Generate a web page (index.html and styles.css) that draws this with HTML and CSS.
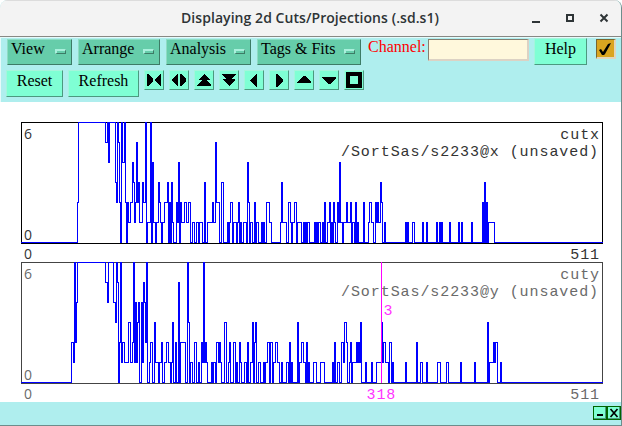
FILE: index.html
```html
<!DOCTYPE html>
<html>
<head>
<meta charset="UTF-8">
<title>Displaying 2d Cuts/Projections (.sd.s1)</title>
<link rel="stylesheet" href="styles.css">
</head>
<body>
<div class="window">
<div class="titlebar">
<span class="title">Displaying 2d Cuts/Projections (.sd.s1)</span>
<svg class="controls" width="80" height="12" viewBox="0 0 80 12">
<path d="M0 10h8" stroke-width="2"/>
<path d="M35 3h6v6h-6z" stroke-width="2"/>
<path d="M68.5 2.5l7 7M75.5 2.5l-7 7" stroke-width="2"/>
</svg>
</div>
<div class="toolbar">
<div class="row menus">
<div class="menu view">View<i></i></div>
<div class="menu arrange">Arrange<i></i></div>
<div class="menu analysis">Analysis<i></i></div>
<div class="menu tags">Tags &amp; Fits<i></i></div>
<label class="channel" for="channel">Channel:</label>
<input class="entry" id="channel" type="text">
<button class="btn help">Help</button>
<button class="check"><svg width="16" height="16" viewBox="0 0 16 16"><path d="M2 9l2-1 2 3 5-8 3-1-1 2-5 9-1 1H5z"/></svg></button>
</div>
<div class="row tools">
<button class="btn reset">Reset</button>
<button class="btn refresh">Refresh</button>
<button class="btn icon"><svg width="18" height="18" viewBox="0 0 18 18"><path d="M2 3h1l5 5v2l-5 5H2zM16 3h-1l-5 5v2l5 5h1z"/></svg></button>
<button class="btn icon"><svg width="18" height="18" viewBox="0 0 18 18"><path d="M8 3v12H7L2 10V8l5-5zM10 3v12h1l5-5V8l-5-5z"/></svg></button>
<button class="btn icon"><svg width="18" height="18" viewBox="0 0 18 18"><path d="M9 3l6 6h-4l5 5v1H2v-1l5-5H3z"/></svg></button>
<button class="btn icon"><svg width="18" height="18" viewBox="0 0 18 18"><path d="M2 3h14v1l-5 4h4v1l-6 6-6-6V8h4L2 4z"/></svg></button>
<button class="btn icon"><svg width="18" height="18" viewBox="0 0 18 18"><path d="M12 3v13h-1l-6-6V9l6-6z"/></svg></button>
<button class="btn icon"><svg width="18" height="18" viewBox="0 0 18 18"><path d="M6 3v13h1l6-6V9L7 3z"/></svg></button>
<button class="btn icon"><svg width="18" height="18" viewBox="0 0 18 18"><path d="M2 12v-1l6-6h2l6 6v1z"/></svg></button>
<button class="btn icon"><svg width="18" height="18" viewBox="0 0 18 18"><path d="M2 6v1l6 6h2l6-6V6z"/></svg></button>
<button class="btn icon"><svg width="18" height="18" viewBox="0 0 18 18"><path fill-rule="evenodd" d="M1 1h16v16H1zM5 5v8h8V5z"/></svg></button>
</div>
</div>
<div class="plots">
<!-- viewBox starts at the left frame line, one count is 20 high -->
<svg class="plot" width="582" height="140" viewBox="21 0 582 140">
<path class="frame" d="M21.5 .5H602.5V121.5H21.5z"/>
<path class="hist" transform="translate(.5 120.5) scale(1 -20)" d="M21 0H77V2H78V6H105V5H107V6H108V4H109V6H115V3H116V2H117V6H118V5H119V2H120V0H121V6H122V4H124V6H125V2H126V0H127V2H128V1H130V2H132V4H133V3H134V1H135V2H136V5H137V2H138V3H139V1H142V3H143V2H145V6H146V0H147V1H150V6H151V0H152V4H153V1H155V0H156V1H158V3H159V2H160V1H161V0H162V1H164V2H167V3H168V0H169V2H170V0H171V3H172V1H173V0H176V2H177V1H178V4H179V0H180V2H181V1H184V2H186V1H188V2H190V0H192V1H194V0H196V1H198V0H199V1H202V0H204V3H205V0H207V1H212V2H213V1H215V5H216V2H219V0H221V3H223V0H227V1H228V0H229V1H230V2H232V0H233V1H236V0H237V1H238V2H239V0H240V1H241V0H243V1H246V0H247V4H248V2H249V0H250V1H252V0H254V2H255V0H256V1H258V0H261V1H262V0H263V1H264V0H266V2H269V1H271V0H280V1H281V3H282V1H286V0H288V2H290V1H291V0H292V1H294V2H296V0H297V1H301V0H303V1H304V0H305V1H306V0H307V1H309V0H314V1H315V0H316V1H317V0H318V1H320V0H322V1H323V0H324V2H325V0H327V1H329V2H330V0H331V1H332V0H333V2H334V1H335V0H337V2H338V1H339V4H340V1H342V0H343V1H346V2H347V1H350V2H351V0H352V1H354V0H355V2H356V0H357V1H358V0H363V2H364V0H368V1H369V2H371V1H373V0H375V2H376V1H377V2H378V1H380V3H381V2H382V0H384V1H385V0H405V1H406V0H407V1H408V0H412V1H414V0H422V1H423V0H426V1H427V0H436V1H437V0H439V1H440V0H441V1H442V0H449V1H450V0H458V1H459V0H461V1H462V0H471V1H472V0H482V2H483V0H484V3H485V0H486V2H487V0H488V1H494V0H602"/>
<text class="num" x="24" y="17">6</text>
<text class="num" x="24" y="118">0</text>
<text class="num" x="24" y="137">0</text>
<text class="mono end" x="600" y="17">cutx</text>
<text class="mono end" x="599" y="34">/SortSas/s2233@x (unsaved)</text>
<text class="mono end" x="600" y="137">511</text>
</svg>
<svg class="plot dim" width="582" height="140" viewBox="21 0 582 140">
<path class="frame" d="M21.5 .5H602.5V121.5H21.5z"/>
<path class="hist" transform="translate(.5 120.5) scale(1 -20)" d="M21 0H71V2H73V1H74V6H75V2H76V4H77V6H105V5H107V4H108V6H113V4H115V3H116V6H117V5H118V0H119V2H120V6H121V1H122V2H124V1H128V3H130V1H132V2H133V6H134V1H135V4H136V1H137V3H138V4H139V0H141V4H142V1H143V5H144V4H145V2H146V6H147V0H149V1H150V2H152V0H154V3H155V1H158V0H159V1H161V2H162V0H164V1H166V2H168V1H170V0H171V1H172V3H173V0H175V2H176V0H178V5H179V0H180V2H185V0H187V6H188V3H189V0H190V1H192V0H194V2H196V0H198V1H199V0H201V2H202V1H203V6H204V1H205V2H206V1H207V0H211V1H212V0H213V1H215V0H216V2H218V1H219V2H220V1H221V0H224V3H226V0H228V1H229V2H230V0H233V2H235V0H236V1H237V0H239V2H240V1H241V0H244V1H246V0H247V2H248V0H250V1H252V3H253V0H254V2H255V3H256V0H258V1H260V0H263V1H264V0H265V1H267V2H269V0H270V2H272V0H273V1H275V2H277V1H279V0H281V1H282V0H286V1H288V0H289V2H290V0H291V1H292V0H297V3H298V0H299V1H301V2H303V1H305V0H306V2H307V0H308V1H309V0H313V1H316V0H320V1H324V0H332V1H333V0H334V2H335V0H337V1H339V0H341V2H343V1H344V3H346V2H347V0H349V1H350V2H351V0H352V1H356V2H357V1H358V2H359V1H360V3H361V0H365V1H366V0H371V1H372V0H376V1H381V3H382V1H383V2H385V1H388V0H389V2H391V0H392V1H393V0H405V1H406V0H416V2H417V0H420V1H422V0H426V1H427V0H437V1H440V0H446V1H448V0H460V1H461V0H474V1H475V0H487V3H488V0H489V1H493V2H494V1H495V2H497V0H500V1H501V0H602"/>
<text class="num" x="24" y="17">6</text>
<text class="num" x="24" y="118">0</text>
<text class="num" x="24" y="137">0</text>
<text class="mono end" x="600" y="17">cuty</text>
<text class="mono end" x="599" y="34">/SortSas/s2233@y (unsaved)</text>
<text class="mono end" x="600" y="137">511</text>
<path class="cursor" d="M381.5 0V121"/>
<text class="mono mark" x="383.5" y="53">3</text>
<text class="mono mark" x="366.500" y="137">318</text>
</svg>
</div>
<div class="footer">
<button class="mini"><svg width="10" height="10" viewBox="0 0 10 10"><path d="M2 7h6" stroke-width="2"/></svg></button>
<button class="mini"><svg width="10" height="10" viewBox="0 0 10 10"><path d="M1.500 1l7 8M8.500 1l-7 8" stroke-width="1.700"/></svg></button>
</div>
</div>
</body>
</html>
```
FILE: styles.css
```css
*{box-sizing:border-box;}
body{margin:0;background:#fff;overflow:hidden;}
.window{width:622px;height:426px;display:flex;flex-direction:column;
border-right:1px solid #6d8d8c;border-bottom:1px solid #6d8d8c;
border-radius:8px 8px 0 0;overflow:hidden;background:#afeeee;}
.titlebar{display:flex;align-items:center;justify-content:flex-end;
height:37px;flex:none;margin-right:-1px;padding:0 10px 2px 0;
background:#f3f3f3;border-bottom:1px solid #888884;
border-top:1px solid #dcdcdc;}
.title{width:258px;margin-right:93px;white-space:nowrap;
font:600 14px "Open Sans","Noto Sans",sans-serif;color:#2e3436;letter-spacing:.06px;}
.controls{fill:none;stroke:#2e3436;}
.toolbar{height:65px;flex:none;padding:1px 5px 0 6px;
border-left:1px solid #e6fafa;border-top:1px solid #e6fafa;
font:16px "Liberation Serif",serif;}
.row{display:flex;align-items:flex-start;}
.menus{height:31px;}
.menu{display:flex;flex:none;justify-content:space-between;height:26px;margin-right:6px;
padding:0 5px 0 3px;line-height:18px;white-space:nowrap;
background:#66cdaa;border:1px solid;border-color:#8fdcc3 #3d7b66 #3d7b66 #8fdcc3;}
.menu i{width:11px;height:5px;margin-top:9px;background:#66cdaa;
border:1px solid;border-color:#a9f0dc #3d7b66 #3d7b66 #a9f0dc;border-width:2px 1px 1px 2px;}
.view{width:65px;}
.arrange{width:82px;}
.analysis{width:85px;}
.tags{width:104px;}
.channel{flex:none;width:60px;color:#f00;line-height:18px;margin-left:1px;margin-top:-1px;}
.entry{flex:none;width:101px;height:22px;padding:0 4px;margin-right:5px;font:inherit;
background:#fff8dc;border:1px solid;border-color:#847f70 #dcd2c4 #dcd2c4 #847f70;border-width:1px 2px 2px 1px;}
.btn{display:block;flex:none;padding:0;font:inherit;color:#000;background:#7fffd4;
border:1px solid;border-color:#a5f5dc #4c997f #4c997f #a5f5dc;}
.help{width:53px;height:27px;margin-top:-1px;margin-right:9px;padding-bottom:5px;}
.check{flex:none;width:20px;height:20px;padding:0;background:#daa520;
border:1px solid;border-color:#79652f #e0d6bd #e0d6bd #79652f;border-width:1px 2px 2px 1px;}
.check svg,.icon svg,.mini svg{display:block;}
.tools{margin-left:-1px;}
.reset{width:57px;height:27px;margin-right:5px;padding-bottom:6px;}
.refresh{width:71px;height:27px;margin-right:5px;padding-bottom:6px;}
.icon{width:20px;height:20px;margin-right:5px;}
.icon svg{shape-rendering:crispEdges;}
.plots{height:300px;flex:none;padding:20px 0 0 21px;background:#fff;}
.plot{display:block;overflow:visible;}
.frame{fill:none;stroke:#000;shape-rendering:crispEdges;}
.hist{fill:none;stroke:#00f;stroke-linecap:square;vector-effect:non-scaling-stroke;shape-rendering:crispEdges;}
.num{font:14px "Open Sans","Noto Sans",sans-serif;fill:#333;}
.mono{font:15px "Liberation Mono",monospace;letter-spacing:.92px;fill:#333;}
.end{text-anchor:end;}
.dim .frame{stroke:#444;}
.dim .num,.dim .mono{fill:#6a6a6a;}
.cursor{stroke:#f0f;shape-rendering:crispEdges;}
.dim .mark{fill:#f3f;}
.footer{display:flex;justify-content:flex-end;flex:1;padding-top:4px;}
.mini{width:14px;height:14px;padding:1px;background:#7fffd4;
border:1px solid #006400;box-shadow:inset -1px -1px #4c997f;}
.mini svg{stroke:#000;fill:none;}
```
